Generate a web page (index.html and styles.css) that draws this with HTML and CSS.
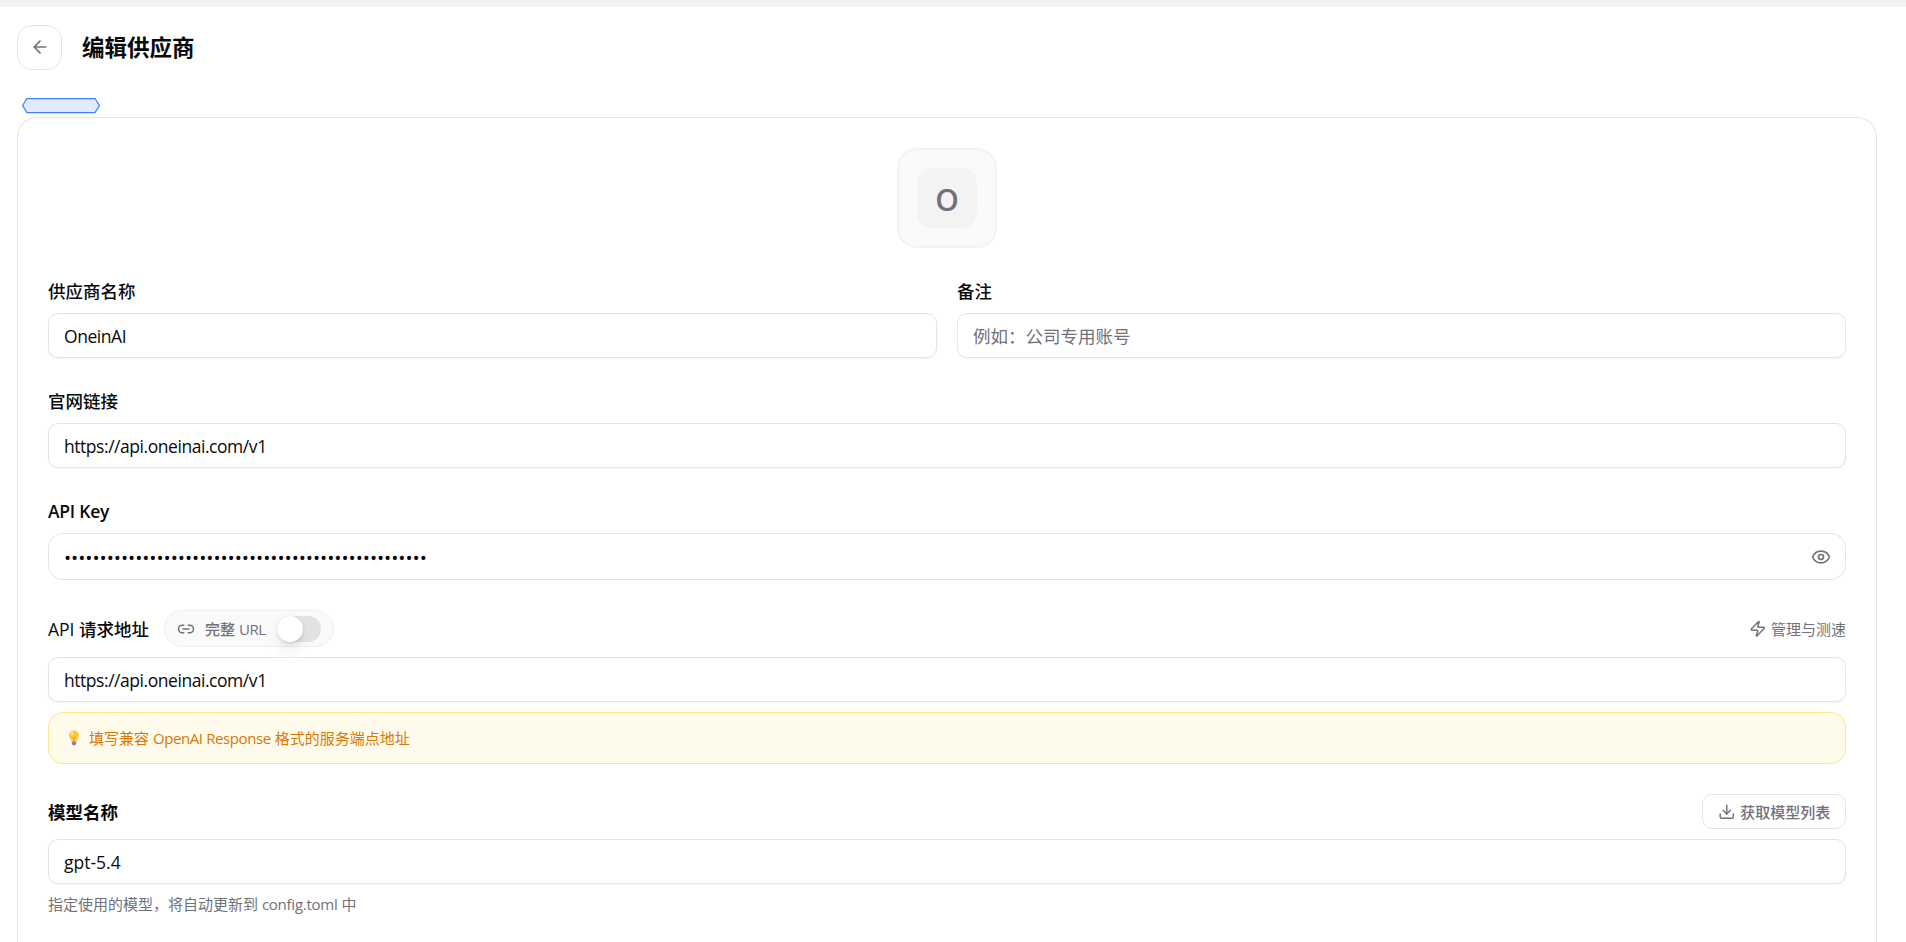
FILE: index.html
```html
<!DOCTYPE html>
<html lang="zh-CN">

<head>
    <meta charset="utf-8">
    <meta name="viewport" content="width=device-width, initial-scale=1.0">
    <title>编辑供应商</title>
    <link rel="stylesheet" href="styles.css">
</head>

<body>
    <div class="topbar"></div>
    <header class="header">
        <button class="back" aria-label="返回">
            <svg class="icon" width="20" height="20" viewBox="0 0 24 24">
                <path d="m12 19-7-7 7-7" />
                <path d="M19 12H5" />
            </svg>
        </button>
        <h1>编辑供应商</h1>
    </header>
    <div class="tag">
        <svg width="78" height="15" viewBox="0 0 78 15">
            <path d="M5 .5H73L77.4 7.5L73 14.5H5L.6 7.5Z" fill="#e1ebfd" stroke="#3b82f6" stroke-width="1.25" />
        </svg>
    </div>

    <form class="card">
        <div class="avatar">
            <div class="avatar-inner">O</div>
        </div>

        <div class="row">
            <div class="field">
                <label class="label">供应商名称</label>
                <input class="input name" type="text" value="OneinAI">
            </div>
            <div class="field">
                <label class="label">备注</label>
                <input class="input note" type="text" placeholder="例如：公司专用账号">
            </div>
        </div>

        <div class="field">
            <label class="label">官网链接</label>
            <input class="input" type="text" value="https://api.oneinai.com/v1">
        </div>

        <div class="field">
            <label class="label strong key-label">API Key</label>
            <div class="key-box">
                <span class="dots">•••••••••••••••••••••••••••••••••••••••••••••••••••</span>
                <svg class="icon" width="20" height="20" viewBox="0 0 24 24">
                    <path d="M2.062 12.348a1 1 0 0 1 0-.696 10.75 10.75 0 0 1 19.876 0 1 1 0 0 1 0 .696 10.75 10.75 0 0 1-19.876 0" />
                    <circle cx="12" cy="12" r="3" />
                </svg>
            </div>
        </div>

        <div class="field">
            <div class="label-row url-row">
                <div class="label-group">
                    <label class="label url-label"><span class="light">API</span> 请求地址</label>
                    <div class="pill">
                        <svg class="icon" width="18" height="18" viewBox="0 0 24 24">
                            <path d="M9 17H7A5 5 0 0 1 7 7h2" />
                            <path d="M15 7h2a5 5 0 1 1 0 10h-2" />
                            <line x1="8" x2="16" y1="12" y2="12" />
                        </svg>
                        <span class="pill-text">完整 <span class="latin">URL</span></span>
                        <span class="switch"><span class="knob"></span></span>
                    </div>
                </div>
                <div class="speed">
                    <svg class="icon" width="17.5" height="17.5" viewBox="0 0 24 24">
                        <path d="M4 14a1 1 0 0 1-.78-1.63l9.9-10.2a.5.5 0 0 1 .86.46l-1.92 6.02A1 1 0 0 0 13 10h7a1 1 0 0 1 .78 1.63l-9.9 10.2a.5.5 0 0 1-.86-.46l1.92-6.02A1 1 0 0 0 11 14z" />
                    </svg>
                    <span>管理与测速</span>
                </div>
            </div>
            <input class="input" type="text" value="https://api.oneinai.com/v1">
            <div class="hint">
                <svg width="12" height="16" viewBox="0 0 12 16">
                    <path d="M6 .5a5 5 0 0 0-5 5c0 2.6 2.3 3.8 2.7 6h4.6c.4-2.2 2.7-3.4 2.7-6a5 5 0 0 0-5-5z" fill="#fcc63a" />
                    <path d="M4.5 7l1.5 1 1.5-1M6 8v3" fill="none" stroke="#e99b20" stroke-width=".8" />
                    <ellipse cx="4.2" cy="3.6" rx="1.3" ry="1.8" fill="#ffe799" />
                    <path d="M3.8 11.5h4.4v2.3L7.2 15.3H4.8l-1-1.5z" fill="#927b9f" />
                </svg>
                <p>填写兼容 <span class="latin">OpenAI Response</span> 格式的服务端点地址</p>
            </div>
        </div>

        <div class="field">
            <div class="label-row model-row">
                <label class="label strong">模型名称</label>
                <button class="fetch" type="button">
                    <svg class="icon" width="17.5" height="17.5" viewBox="0 0 24 24">
                        <path d="M12 15V3" />
                        <path d="M21 15v4a2 2 0 0 1-2 2H5a2 2 0 0 1-2-2v-4" />
                        <path d="m7 10 5 5 5-5" />
                    </svg>
                    <span>获取模型列表</span>
                </button>
            </div>
            <input class="input model" type="text" value="gpt-5.4">
            <p class="help">指定使用的模型，将自动更新到 <span class="latin">config.toml</span> 中</p>
        </div>
    </form>
</body>

</html>
```

FILE: styles.css
```css
* {
    box-sizing: border-box;
    margin: 0;
    padding: 0;
}

body {
    height: 942px;
    overflow: hidden;
    background: #fff;
    color: #09090b;
    font-family: "Open Sans", "Noto Sans CJK SC", sans-serif;
    font-size: 17.5px;
}

button,
input {
    font: inherit;
    color: inherit;
    background: #fff;
}

.icon {
    flex: none;
    fill: none;
    stroke: #71717a;
    stroke-width: 2;
    stroke-linecap: round;
    stroke-linejoin: round;
}

.topbar {
    height: 7px;
    background: #f2f2f2;
}

.header {
    display: flex;
    align-items: center;
    gap: 20px;
    padding: 18px 17px 0;
}

.header h1 {
    font-size: 22.5px;
    line-height: 30px;
    font-weight: 600;
}

.back {
    display: flex;
    align-items: center;
    justify-content: center;
    width: 45px;
    height: 45px;
    padding-bottom: 1px;
    border: 1px solid #e4e4e7;
    border-radius: 15px;
}

.tag {
    height: 15px;
    margin: 28px 0 4px 22px;
}

.tag svg {
    display: block;
    overflow: visible;
}

.card {
    width: 1860px;
    height: 825px;
    margin-left: 17px;
    padding: 30px 30px 0;
    border: 1px solid #e4e4e4;
    border-bottom: none;
    border-radius: 20px 20px 0 0;
    display: flex;
    flex-direction: column;
    gap: 30px;
}

.avatar {
    align-self: center;
    display: flex;
    align-items: center;
    justify-content: center;
    width: 100px;
    height: 100px;
    flex: none;
    border: 2px solid #f3f3f3;
    border-radius: 20px;
    background: #fafafa;
}

.avatar-inner {
    width: 60px;
    height: 60px;
    border-radius: 15px;
    background: #f3f3f3;
    color: #71717a;
    font-size: 30px;
    line-height: 63px;
    font-weight: 600;
    text-align: center;
}

.row {
    display: flex;
    gap: 20px;
}

.field {
    flex: none;
    display: flex;
    flex-direction: column;
    gap: 10px;
}

.row .field {
    flex: 1;
}

.label {
    height: 25px;
    line-height: 27px;
    font-weight: 500;
}

.strong {
    font-weight: 600;
}

.key-label {
    letter-spacing: -.25px;
}

.light {
    font-weight: 400;
}

.input {
    width: 100%;
    height: 45px;
    padding: 1px 15px 0;
    border: 1px solid #e4e4e7;
    border-radius: 10px;
    box-shadow: 0 1px 2px rgba(0, 0, 0, .05);
    outline: none;
    letter-spacing: -.45px;
}

.note,
.model {
    letter-spacing: normal;
}

.input::placeholder {
    color: #71717a;
    opacity: 1;
}

.key-box {
    display: flex;
    align-items: center;
    justify-content: space-between;
    height: 47px;
    padding: 0 14px 0 15px;
    border: 1px solid #e4e4e7;
    border-radius: 15px;
}

.dots {
    padding-top: 2px;
    font-size: 19px;
    line-height: 24px;
    font-weight: 500;
    letter-spacing: -.03px;
}

.label-row {
    display: flex;
    align-items: center;
    justify-content: space-between;
}

.url-row {
    height: 37px;
}

.label-group {
    display: flex;
    align-items: center;
    gap: 15px;
}

.url-label {
    width: 101px;
    white-space: nowrap;
}

.pill {
    display: flex;
    align-items: center;
    width: 170px;
    height: 37px;
    padding: 0 12px;
    border: 1px solid #eeeeef;
    border-radius: 19px;
    background: #fafafa;
    color: #71717a;
    font-size: 15px;
    font-weight: 500;
}

.pill-text {
    width: 73px;
    margin-left: 10px;
    white-space: nowrap;
}

.latin {
    letter-spacing: -.4px;
}

.switch {
    flex: none;
    width: 44px;
    height: 26px;
    border-radius: 13px;
    background: #e2e2e4;
}

.knob {
    display: block;
    width: 26px;
    height: 26px;
    border-radius: 50%;
    background: #fff;
    box-shadow: 0 10px 15px -3px rgba(0, 0, 0, .1), 0 4px 6px -4px rgba(0, 0, 0, .1), 0 1px 4px rgba(0, 0, 0, .1);
}

.speed {
    display: flex;
    align-items: center;
    gap: 4px;
    color: #71717a;
    font-size: 15px;
}

.hint {
    display: flex;
    align-items: center;
    gap: 9px;
    height: 52px;
    padding: 0 19px;
    border: 1px solid #fbe68a;
    border-radius: 15px;
    background: #fffbeb;
    color: #d97706;
    font-size: 15px;
}

.hint p {
    padding-bottom: 1px;
}

.model-row {
    height: 35px;
}

.fetch {
    display: flex;
    align-items: center;
    justify-content: center;
    gap: 5px;
    width: 144px;
    height: 35px;
    border: 1px solid #e4e4e7;
    border-radius: 10px;
    color: #71717a;
    font-size: 15px;
    font-weight: 500;
}

.help {
    height: 20px;
    line-height: 20px;
    color: #71717a;
    font-size: 15px;
}

.help .latin {
    letter-spacing: -.25px;
}
```
